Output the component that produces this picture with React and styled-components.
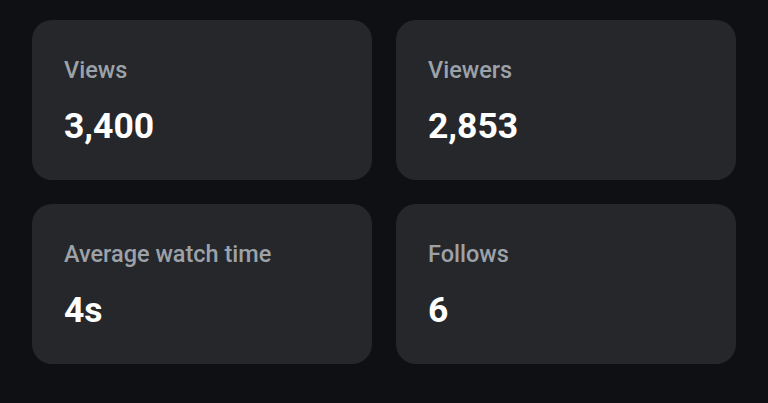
import React from "react";
import styled, { createGlobalStyle } from "styled-components";

const Global = createGlobalStyle`
  html, body { margin: 0; padding: 0; background: #0e1014; }
  body { font-family: Roboto, "Noto Sans", sans-serif; }
`;

const Page = styled.div`
  width: 768px;
  height: 403px;
  box-sizing: border-box;
  padding: 20px 32px;
  background: #0e1014;
`;

const Grid = styled.div`
  display: grid;
  grid-template-columns: 1fr 1fr;
  grid-auto-rows: 160px;
  gap: 24px;
`;

const Card = styled.div`
  background: #25272b;
  border-radius: 20px;
  padding: 36px 32px 0;
  box-sizing: border-box;
  display: flex;
  flex-direction: column;
`;

const Label = styled.div`
  color: #9da2a9;
  font-size: 23.5px;
  line-height: 28px;
  font-weight: 500;
`;

const Value = styled.div`
  color: #ffffff;
  font-size: 35.5px;
  line-height: 40px;
  font-weight: 700;
  margin-top: 22px;
`;

const stats = [
  { label: "Views", value: "3,400" },
  { label: "Viewers", value: "2,853" },
  { label: "Average watch time", value: "4s" },
  { label: "Follows", value: "6" },
];

export default function App() {
  return (
    <>
      <Global />
      <Page>
        <Grid>
          {stats.map((s) => (
            <Card key={s.label}>
              <Label>{s.label}</Label>
              <Value>{s.value}</Value>
            </Card>
          ))}
        </Grid>
      </Page>
    </>
  );
}
